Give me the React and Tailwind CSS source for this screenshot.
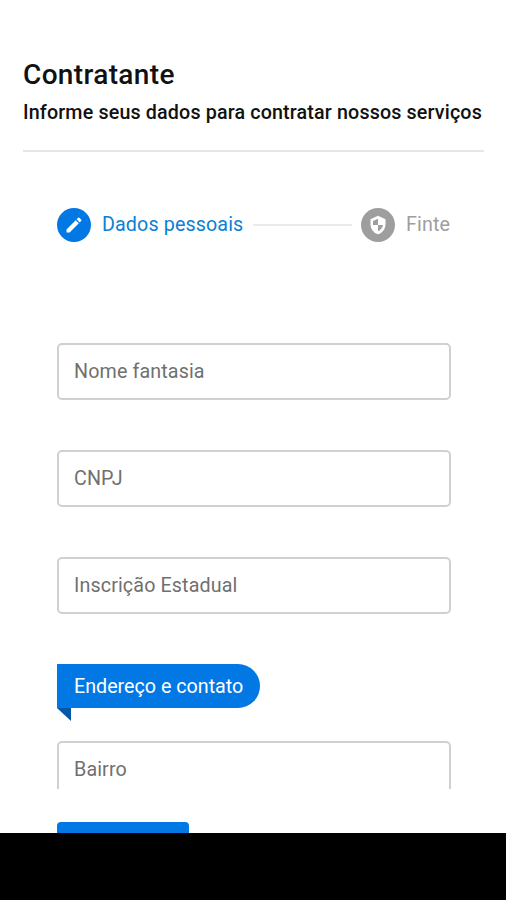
import { MdEdit } from 'react-icons/md';

const fields = ['Nome fantasia', 'CNPJ', 'Inscrição Estadual'];

const ShieldIcon = () => (
  <svg className="h-5 w-5" viewBox="0 0 24 24" fill="currentColor" fillRule="evenodd">
    <path d="M12 1L3 5v6c0 5.55 3.84 10.74 9 12 5.16-1.26 9-6.45 9-12V5l-9-4zM12 4.6v7.4H6V7.3l6-2.7zM12 12h6c-.6 3.4-2.9 6.3-6 7.6V12z" />
  </svg>
);

const Field = ({ label }) => (
  <input
    type="text"
    aria-label={label}
    placeholder={label}
    className="block w-full h-[57px] shrink-0 rounded-[5px] border-2 border-[#d0d0d0] bg-white px-[15px] text-[19.7px] tracking-[0.12px] text-gray-900 placeholder-[#707070] focus:outline-none focus:border-[#0278e4]"
  />
);

const App = () => {
  return (
    <div className="h-[900px] w-[506px] overflow-hidden bg-black font-['Roboto','Liberation_Sans',sans-serif]">
      <div className="flex h-[833px] flex-col overflow-hidden bg-white">

        {/* Header */}
        <header className="mr-[22px] ml-[23px] mt-[56px] h-[96px] shrink-0 border-b-2 border-[#e6e6e6] whitespace-nowrap text-[#111111]">
          <h1 className="text-[28px] leading-[37px] font-medium tracking-[0.35px]">Contratante</h1>
          <p className="mt-[7px] text-[19.7px] leading-[26px] font-medium tracking-[0.15px]">
            Informe seus dados para contratar nossos serviços
          </p>
        </header>

        {/* Steps */}
        <div className="mx-[57px] mt-[56px] flex h-[34px] w-[394px] shrink-0 items-center whitespace-nowrap text-[19.7px] tracking-[0.12px]">
          <div className="flex size-[34px] shrink-0 items-center justify-center rounded-full bg-[#0278e4] text-white">
            <MdEdit size={20} />
          </div>
          <span className="ml-[11px] w-[141px] text-[#0b80d4]">Dados pessoais</span>
          <div className="ml-[10px] h-[2px] w-[99px] bg-[#ebebeb]"></div>
          <div className="ml-[9px] flex size-[34px] shrink-0 items-center justify-center rounded-full bg-[#9e9e9e] text-white">
            <ShieldIcon />
          </div>
          <span className="ml-[11px] text-[#9e9e9e]">Finte</span>
        </div>

        {/* Form */}
        <div className="mt-[101px] ml-[57px] flex h-[446px] w-[394px] shrink-0 flex-col overflow-hidden">
          <div className="flex flex-col gap-[50px]">
            {fields.map((label) => (
              <Field key={label} label={label} />
            ))}
          </div>

          <div className="mt-[50px] shrink-0">
            <h2 className="flex h-[44px] w-[203px] items-center rounded-r-full bg-[#0278e4] pt-px pl-[17px] text-[19.7px] whitespace-nowrap text-white">
              Endereço e contato
            </h2>
            <div className="h-[13px] w-[14px] bg-[#0558a8] [clip-path:polygon(0_0,100%_0,100%_100%)]"></div>
          </div>

          <div className="mt-[20px]">
            <Field label="Bairro" />
          </div>
        </div>

        <button type="button" aria-label="Continuar" className="mt-[33px] ml-[57px] h-[44px] w-[132px] shrink-0 rounded-[4px] bg-[#0278e4]"></button>
      </div>
    </div>
  );
};

export default App;
